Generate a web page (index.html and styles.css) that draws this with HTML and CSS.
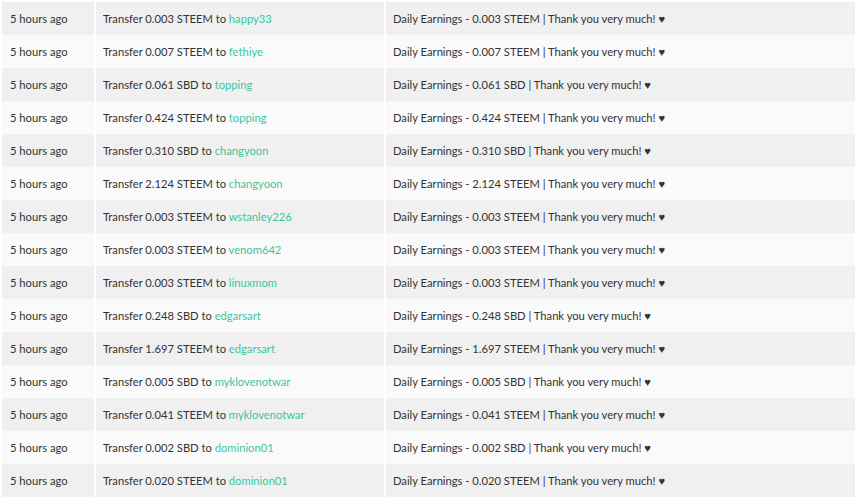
FILE: index.html
```html
<!DOCTYPE html>
<html>
<head>
<meta charset="utf-8">
<link rel="stylesheet" href="styles.css">
</head>
<body>
<table class="tx">
<tbody>
<tr><td class="c1">5 hours ago</td><td class="c2">Transfer 0.003 STEEM to <a href="#">happy33</a></td><td class="c3">Daily Earnings - 0.003 STEEM | Thank you very much! ♥</td></tr>
<tr><td class="c1">5 hours ago</td><td class="c2">Transfer 0.007 STEEM to <a href="#">fethiye</a></td><td class="c3">Daily Earnings - 0.007 STEEM | Thank you very much! ♥</td></tr>
<tr><td class="c1">5 hours ago</td><td class="c2">Transfer 0.061 SBD to <a href="#">topping</a></td><td class="c3">Daily Earnings - 0.061 SBD | Thank you very much! ♥</td></tr>
<tr><td class="c1">5 hours ago</td><td class="c2">Transfer 0.424 STEEM to <a href="#">topping</a></td><td class="c3">Daily Earnings - 0.424 STEEM | Thank you very much! ♥</td></tr>
<tr><td class="c1">5 hours ago</td><td class="c2">Transfer 0.310 SBD to <a href="#">changyoon</a></td><td class="c3">Daily Earnings - 0.310 SBD | Thank you very much! ♥</td></tr>
<tr><td class="c1">5 hours ago</td><td class="c2">Transfer 2.124 STEEM to <a href="#">changyoon</a></td><td class="c3">Daily Earnings - 2.124 STEEM | Thank you very much! ♥</td></tr>
<tr><td class="c1">5 hours ago</td><td class="c2">Transfer 0.003 STEEM to <a href="#">wstanley226</a></td><td class="c3">Daily Earnings - 0.003 STEEM | Thank you very much! ♥</td></tr>
<tr><td class="c1">5 hours ago</td><td class="c2">Transfer 0.003 STEEM to <a href="#">venom642</a></td><td class="c3">Daily Earnings - 0.003 STEEM | Thank you very much! ♥</td></tr>
<tr><td class="c1">5 hours ago</td><td class="c2">Transfer 0.003 STEEM to <a href="#">linuxmom</a></td><td class="c3">Daily Earnings - 0.003 STEEM | Thank you very much! ♥</td></tr>
<tr><td class="c1">5 hours ago</td><td class="c2">Transfer 0.248 SBD to <a href="#">edgarsart</a></td><td class="c3">Daily Earnings - 0.248 SBD | Thank you very much! ♥</td></tr>
<tr><td class="c1">5 hours ago</td><td class="c2">Transfer 1.697 STEEM to <a href="#">edgarsart</a></td><td class="c3">Daily Earnings - 1.697 STEEM | Thank you very much! ♥</td></tr>
<tr><td class="c1">5 hours ago</td><td class="c2">Transfer 0.005 SBD to <a href="#">myklovenotwar</a></td><td class="c3">Daily Earnings - 0.005 SBD | Thank you very much! ♥</td></tr>
<tr><td class="c1">5 hours ago</td><td class="c2">Transfer 0.041 STEEM to <a href="#">myklovenotwar</a></td><td class="c3">Daily Earnings - 0.041 STEEM | Thank you very much! ♥</td></tr>
<tr><td class="c1">5 hours ago</td><td class="c2">Transfer 0.002 SBD to <a href="#">dominion01</a></td><td class="c3">Daily Earnings - 0.002 SBD | Thank you very much! ♥</td></tr>
<tr><td class="c1">5 hours ago</td><td class="c2">Transfer 0.020 STEEM to <a href="#">dominion01</a></td><td class="c3">Daily Earnings - 0.020 STEEM | Thank you very much! ♥</td></tr>
</tbody>
</table>
</body>
</html>
```
FILE: styles.css
```css
html, body {
  margin: 0;
  padding: 0;
  background: #ffffff;
}
body {
  padding: 2px 0 0 2px;
  font-family: Lato, "Open Sans", sans-serif;
  font-size: 11.2px;
  color: #333333;
}
.tx {
  border-collapse: collapse;
  width: 853px;
  table-layout: fixed;
}
.tx tr {
  height: 33px;
}
.tx tr:nth-child(odd) td {
  background: #f0f0f0;
}
.tx tr:nth-child(even) td {
  background: #fafafa;
}
.tx td {
  padding: 0 8px;
  border-left: 2px solid #ffffff;
  white-space: nowrap;
  vertical-align: middle;
}
.tx td.c1 {
  border-left: 0;
  width: 93px;
  box-sizing: border-box;
}
.tx td.c2 {
  width: 290px;
  box-sizing: border-box;
  padding-left: 7px;
}
.tx td.c3 {
  padding-left: 7px;
}
.tx a {
  color: #3cc59e;
  text-decoration: none;
}
```
